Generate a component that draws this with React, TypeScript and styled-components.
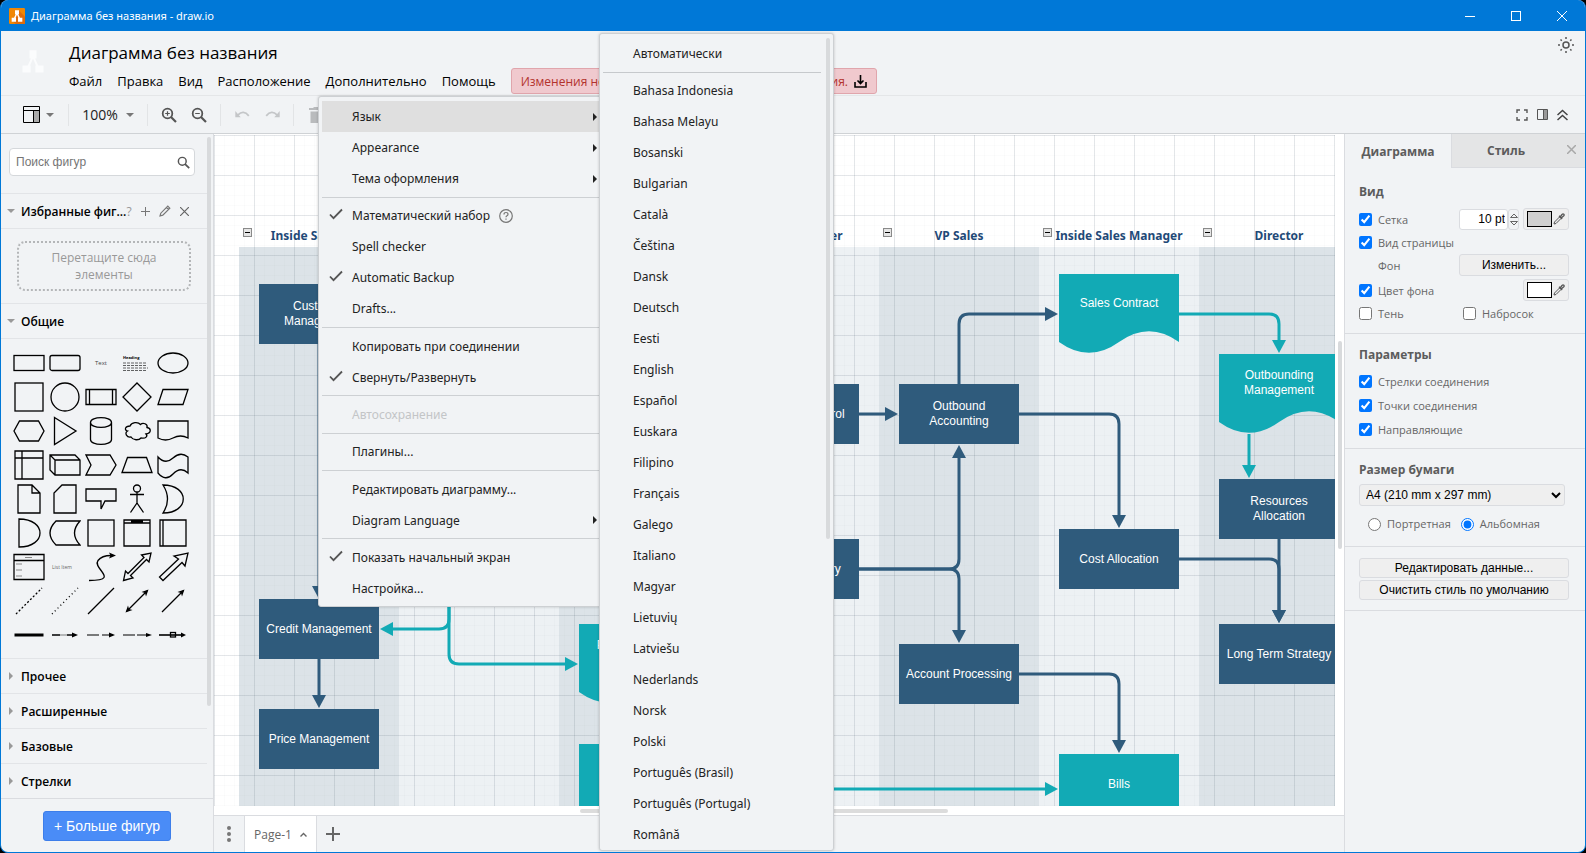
import React from "react";
import styled, { createGlobalStyle, css } from "styled-components";

const ui = `"Open Sans", "Noto Sans", sans-serif`;
const noto = `"Noto Sans", "Open Sans", sans-serif`;
const arial = `"Liberation Sans", Arial, sans-serif`;
const surface = "#f1f3f5";
const line = "#dadce0";
const navy = "#2f5b7c";
const teal = "#12aab5";

const GlobalStyle = createGlobalStyle`
  * { box-sizing: border-box; }
  html, body { margin: 0; background: #000; }
  body { font-family: ${ui}; font-size: 13px; color: #000; }
  button, input, select { font-family: inherit; }
`;

/* ---------- window frame ---------- */

const Window = styled.div`
  position: relative;
  display: flex;
  flex-direction: column;
  height: 100vh;
  min-height: 640px;
  overflow: hidden;
  border: 1px solid #0078d7;
  border-top: 0;
  border-radius: 8px;
  background: ${surface};
`;

const TitleBar = styled.header`
  display: flex;
  align-items: center;
  flex: none;
  height: 31px;
  padding-left: 8px;
  background: #0078d7;
  color: #fff;
  font-family: ${noto};
  font-size: 11px;
`;

const WindowTitle = styled.span`
  flex: 1;
  padding-left: 6px;
`;

const CaptionButton = styled.button`
  display: flex;
  align-items: center;
  justify-content: center;
  width: 46px;
  height: 31px;
  padding: 0;
  border: 0;
  background: none;
  color: #fff;
`;

const Header = styled.div`
  display: flex;
  flex: none;
  height: 65px;
  padding-left: 12px;
  border-bottom: 1px solid #e4e6e8;
`;

const LogoArea = styled.div`
  width: 56px;
  padding: 17px 0 0 6px;
`;

const HeaderMain = styled.div`
  flex: 1;
`;

const DocTitle = styled.h1`
  margin: 0;
  padding-top: 7px;
  font-size: 17px;
  line-height: 30px;
  font-weight: 400;
`;

const MenuBar = styled.nav`
  display: flex;
  align-items: center;
  height: 26px;
`;

const MenuButton = styled.button`
  margin-right: 15px;
  padding: 0;
  border: 0;
  background: none;
  font-size: 13px;
  line-height: 26px;
  color: #000;
`;

const Notice = styled.button`
  display: flex;
  align-items: center;
  gap: 6px;
  height: 26px;
  padding: 0 9px;
  border: 1px solid #e0a5ac;
  border-radius: 3px;
  background: #f0c9ce;
  color: #b3322d;
  font-size: 12px;
  white-space: nowrap;
`;

const HeaderSide = styled.div`
  padding: 6px 11px 0 0;
`;

const IconButton = styled.button<{ $w?: number }>`
  display: flex;
  align-items: center;
  justify-content: center;
  gap: 6px;
  width: ${(p) => p.$w ?? 16}px;
  padding: 0;
  border: 0;
  background: none;
  color: #555;
`;

/* ---------- toolbar ---------- */

const Toolbar = styled.div`
  display: flex;
  align-items: center;
  flex: none;
  height: 38px;
  padding: 0 15px 0 20px;
  border-bottom: 1px solid #cfd2d5;
`;

const ToolGroup = styled.div<{ $w: number; $start?: boolean }>`
  display: flex;
  align-items: center;
  justify-content: ${(p) => (p.$start ? "flex-start" : "center")};
  gap: 14px;
  width: ${(p) => p.$w}px;
  height: 22px;
  border-right: 1px solid #e2e4e6;
`;

const ZoomButton = styled.button`
  display: flex;
  align-items: center;
  gap: 8px;
  padding: 0;
  border: 0;
  background: none;
  font-size: 14px;
  line-height: 22px;
  color: #222;
`;

const Spacer = styled.div`
  flex: 1;
`;

const ToolbarSide = styled.div`
  display: flex;
  gap: 4px;
`;

/* ---------- sidebar ---------- */

const Body = styled.div`
  display: flex;
  flex: 1;
  min-height: 0;
`;

const Sidebar = styled.aside`
  display: flex;
  flex-direction: column;
  flex: none;
  width: 213px;
  border-right: 1px solid ${line};
`;

const SidebarScroll = styled.div`
  display: flex;
  flex: 1;
  min-height: 0;
  overflow: hidden;
  padding-right: 2px;
  border-bottom: 1px solid ${line};
`;

const Palettes = styled.div`
  flex: 1;
`;

const Thumb = styled.div<{ $h: number; $top: number }>`
  flex: none;
  width: 4px;
  height: ${(p) => p.$h}px;
  margin-top: ${(p) => p.$top}px;
  background: #d8dadc;
  border-radius: 2px;
`;

const SearchBox = styled.label`
  display: flex;
  align-items: center;
  width: 186px;
  height: 28px;
  margin: 14px 0 17px 8px;
  padding-right: 4px;
  border: 1px solid #d5d8db;
  border-radius: 4px;
  background: #fff;
`;

const SearchInput = styled.input`
  flex: 1;
  min-width: 0;
  padding: 0 0 0 6px;
  border: 0;
  outline: 0;
  background: none;
  font-family: ${arial};
  font-size: 12px;
  &::placeholder { color: #757575; }
`;

const PaletteTitle = styled.div`
  display: flex;
  align-items: center;
  height: 35px;
  border-top: 1px solid #e2e4e7;
  padding-left: 6px;
`;

const PaletteToggle = styled.button`
  display: flex;
  align-items: center;
  gap: 6px;
  padding: 0;
  border: 0;
  background: none;
  font-size: 12px;
  font-weight: 600;
  color: #000;
  white-space: nowrap;
`;

const PaletteTools = styled.div`
  display: flex;
  align-items: center;
  gap: 9px;
  color: #999;
  font-size: 12px;
`;

const DropHint = styled.div`
  display: flex;
  align-items: center;
  justify-content: center;
  width: 174px;
  height: 50px;
  margin: 12px 0 12px 16px;
  border: 2px dotted #b4b6b8;
  border-radius: 8px;
  color: #999;
  font-size: 12px;
  line-height: 17px;
  text-align: center;
`;

const ShapeBlock = styled.div`
  border-top: 1px solid #e2e4e7;
`;

const ShapeGrid = styled.div`
  display: grid;
  grid-template-columns: repeat(5, 36px);
  grid-auto-rows: 34px;
  padding: 7px 0 6px 10px;
`;

const ShapeButton = styled.button`
  display: flex;
  align-items: center;
  justify-content: center;
  padding: 0;
  border: 0;
  background: none;
`;

const MoreArea = styled.div`
  display: flex;
  justify-content: center;
  flex: none;
  height: 53px;
  padding-top: 12px;
`;

const MoreButton = styled.button`
  width: 128px;
  height: 30px;
  padding: 0;
  border: 1px solid #3d7eea;
  border-radius: 3px;
  background: #4a8cf7;
  color: #fff;
  font-family: ${arial};
  font-size: 14px;
`;

/* ---------- canvas ---------- */

const Center = styled.main`
  display: flex;
  flex-direction: column;
  flex: 1;
  min-width: 0;
`;

const CanvasArea = styled.div`
  display: grid;
  grid-template-columns: 1fr 9px;
  grid-template-rows: 1fr 9px;
  flex: 1;
  min-height: 0;
  background: #fff;
`;

const Viewport = styled.div`
  position: relative;
  overflow: hidden;
`;

const Grid = styled.div`
  position: absolute;
  inset: 1px 0 0 0;
  background-image: linear-gradient(to right, rgba(60, 80, 100, 0.12) 1px, transparent 1px),
    linear-gradient(to bottom, rgba(60, 80, 100, 0.12) 1px, transparent 1px),
    linear-gradient(to right, rgba(60, 80, 100, 0.02) 1px, transparent 1px),
    linear-gradient(to bottom, rgba(60, 80, 100, 0.02) 1px, transparent 1px);
  background-size: 40px 40px, 40px 40px, 10px 10px, 10px 10px;
`;

const Lane = styled.section<{ $index: number }>`
  position: absolute;
  left: ${(p) => 25 + p.$index * 160}px;
  top: 86px;
  bottom: 0;
  width: 160px;
  display: flex;
  flex-direction: column;
`;

const LaneHead = styled.div`
  position: relative;
  flex: none;
  height: 27px;
  background: #fff;
  color: #1f4a78;
  font-family: ${noto};
  font-size: 12px;
  line-height: 32px;
  font-weight: 700;
  text-align: center;
  white-space: nowrap;
`;

const LaneFill = styled.div<{ $dark: boolean }>`
  flex: 1;
  background: ${(p) => (p.$dark ? "#dce3e8" : "#edf1f4")};
`;

const Fold = styled.button`
  position: absolute;
  left: 4px;
  top: 8px;
  display: flex;
  align-items: center;
  justify-content: center;
  width: 9px;
  height: 9px;
  padding: 0;
  border: 1px solid #8a8a8a;
  background: #e6e6e6;
  &::before { content: ""; width: 5px; height: 1px; background: #000; }
`;

const Edges = styled.svg`
  position: absolute;
  left: 0;
  top: 0;
  overflow: visible;
`;

const Node = styled.div<{ $x: number; $y: number; $h: number; $fill?: string }>`
  position: absolute;
  left: ${(p) => p.$x}px;
  top: ${(p) => p.$y}px;
  display: flex;
  align-items: center;
  justify-content: center;
  width: 120px;
  height: ${(p) => p.$h}px;
  background: ${(p) => p.$fill ?? "none"};
  color: #fff;
  font-family: ${arial};
  font-size: 12px;
  line-height: 15px;
  text-align: center;
  white-space: pre;
`;

const VScroll = styled.div`
  display: flex;
  justify-content: center;
`;

const HScroll = styled.div`
  display: flex;
  align-items: center;
  padding-left: 366px;
`;

const HThumb = styled.div`
  width: 368px;
  height: 4px;
  border-radius: 2px;
  background: #dcdcdc;
`;

const PageTabs = styled.div`
  display: flex;
  flex: none;
  height: 37px;
  border-top: 1px solid ${line};
`;

const PageTab = styled.button`
  display: flex;
  align-items: center;
  justify-content: center;
  gap: 8px;
  width: 73px;
  padding: 0;
  border: 0;
  border-right: 1px solid ${line};
  border-left: 1px solid ${line};
  background: #fff;
  color: #666;
  font-size: 12px;
`;

/* ---------- format panel ---------- */

const Panel = styled.aside`
  flex: none;
  width: 241px;
  border-left: 1px solid ${line};
  color: #666;
  font-size: 11px;
`;

const Tabs = styled.div`
  display: flex;
  height: 34px;
  font-size: 12px;
  font-weight: 700;
`;

const Tab = styled.button<{ $active?: boolean }>`
  flex: 1;
  padding: 0;
  border: 0;
  background: none;
  color: #5c5c5c;
  font: inherit;
  ${(p) =>
    !p.$active &&
    css`
      display: flex;
      align-items: center;
      padding-left: 35px;
      border-left: 1px solid ${line};
      border-bottom: 1px solid ${line};
      background: #e4e5e6;
      flex: 0 0 134px;
    `}
`;

const TabClose = styled.span`
  display: flex;
  justify-content: flex-end;
  flex: 1;
  padding: 0 9px 3px 0;
  color: #a8a8a8;
`;

const Section = styled.section<{ $pt: number; $pb: number }>`
  padding: ${(p) => p.$pt}px 16px ${(p) => p.$pb}px 14px;
  border-bottom: 1px solid ${line};
`;

const SectionTitle = styled.h2`
  margin: 0 0 4px;
  font-size: 12px;
  line-height: 20px;
  font-weight: 700;
  color: #5c5c5c;
`;

const Row = styled.div<{ $h: number }>`
  display: flex;
  align-items: center;
  height: ${(p) => p.$h}px;
`;

const Check = styled.label<{ $w?: number }>`
  display: flex;
  align-items: center;
  gap: 6px;
  ${(p) => (p.$w ? `width: ${p.$w}px;` : "flex: 1;")}
  white-space: nowrap;
`;

const Box = styled.input`
  width: 13px;
  height: 13px;
  margin: 0;
`;

const BackgroundLabel = styled.span`
  flex: 1;
  padding-left: 19px;
`;

const SizeInput = styled.input`
  width: 49px;
  height: 21px;
  padding: 0 2px;
  border: 1px solid ${line};
  border-radius: 3px;
  background: #fff;
  font-family: ${arial};
  font-size: 12px;
  text-align: right;
`;

const Stepper = styled.span`
  display: flex;
  align-items: center;
  justify-content: center;
  width: 11px;
  height: 21px;
  margin-right: 4px;
  border: 1px solid ${line};
  border-radius: 3px;
`;

const ColorButton = styled.button<{ $color: string }>`
  display: flex;
  align-items: center;
  justify-content: space-between;
  width: 46px;
  height: 22px;
  padding: 0 3px;
  border: 1px solid ${line};
  border-radius: 3px;
  background: #efefef;
  color: #444;
  &::before {
    content: "";
    width: 23px;
    height: 14px;
    border: 1px solid #000;
    background: ${(p) => p.$color};
  }
`;

const PlainButton = styled.button<{ $w: number; $h: number }>`
  display: block;
  width: ${(p) => p.$w}px;
  height: ${(p) => p.$h}px;
  padding: 0;
  border: 1px solid ${line};
  border-radius: 3px;
  background: #efefef;
  color: #000;
  font-family: ${arial};
  font-size: 12px;
`;

const Actions = styled.div`
  display: grid;
  gap: 2px;
`;

const PaperSelect = styled.select`
  display: block;
  width: 206px;
  height: 22px;
  padding: 0 2px;
  border: 1px solid ${line};
  border-radius: 3px;
  background: #efefef;
  color: #000;
  font-family: ${arial};
  font-size: 12px;
`;

const Orientation = styled.div`
  display: flex;
  gap: 10px;
  padding: 9px 0 0 9px;
`;

const Radio = styled.label`
  display: flex;
  align-items: center;
  gap: 6px;
  line-height: 18px;
`;

/* ---------- menus ---------- */

const Popup = styled.div<{ $x: number; $y: number; $w: number }>`
  position: absolute;
  left: ${(p) => p.$x}px;
  top: ${(p) => p.$y}px;
  width: ${(p) => p.$w}px;
  display: flex;
  flex-direction: column;
  padding: 4px 3px 2px;
  border: 1px solid #cdd0d3;
  border-radius: 3px;
  background: ${surface};
  box-shadow: 0 0 3px rgba(0, 0, 0, 0.2);
`;

const MainPopup = styled(Popup)`
  min-height: 511px;
`;

const LanguagePopup = styled(Popup)`
  flex-direction: row;
  bottom: 1px;
  overflow: hidden;
`;

const LanguageList = styled.div`
  flex: 1;
`;

const MenuItem = styled.button<{ $hover?: boolean }>`
  display: flex;
  align-items: center;
  flex: none;
  width: 100%;
  height: 31px;
  padding: 0 5px 0 0;
  border: 0;
  background: ${(p) => (p.$hover ? "#dfdfdf" : "none")};
  color: #222;
  font-family: ${noto};
  font-size: 12px;
  text-align: left;
  white-space: nowrap;
  &:disabled { color: #c3c5c7; }
`;

const MenuMark = styled.span`
  display: flex;
  width: 30px;
  padding: 0 0 3px 7px;
`;

const MenuText = styled.span`
  display: flex;
  align-items: center;
  flex: 1;
  gap: 9px;
`;

const MenuRule = styled.hr`
  flex: 1;
  width: 100%;
  min-height: 6px;
  margin: 0;
  border: 0;
  background: linear-gradient(#cdd0d3, #cdd0d3) center / 100% 1px no-repeat;
`;

const LanguageRule = styled.hr`
  height: 6px;
  margin: 0 5px 0 0;
  border: 0;
  background: linear-gradient(#c6c9cc, #c6c9cc) center / 100% 1px no-repeat;
`;

/* ---------- icons ---------- */

const Caret = ({ dir = "down", color = "#777" }: { dir?: "down" | "right"; color?: string }) => (
  <svg width="8" height="8" viewBox="0 0 8 8" fill={color}>
    <path d={dir === "down" ? "M0 2h8L4 6z" : "M2 0v8l4-4z"} />
  </svg>
);

const LogoMark = ({ size, color }: { size: number; color: string }) => (
  <svg width={size} height={size} viewBox="0 0 24 24" fill={color}>
    <path d="M9 2h6v7h-1.200l2.700 6H21v6h-7v-6h.500l-2.500-6-2.500 6H10v6H3v-6h4.500l2.700-6H9z" />
  </svg>
);

const Magnifier = ({ sign, size = 16 }: { sign?: "+" | "-"; size?: number }) => (
  <svg width={size} height={size} viewBox="0 0 16 16" fill="none" stroke="#555" strokeWidth="1.800">
    <circle cx="6.500" cy="6.500" r="4.800" />
    <path d="M10 10l5 5" strokeWidth="2.200" />
    {sign && <path d="M4.200 6.500h4.600" strokeWidth="1.200" />}
    {sign === "+" && <path d="M6.500 4.200v4.600" strokeWidth="1.200" />}
  </svg>
);

const Pipette = () => (
  <svg width="12" height="12" viewBox="0 0 12 12" fill="none" stroke="#555" strokeWidth="1">
    <path d="M1 11l.500-2 5-5 1.500 1.500-5 5z" />
    <path d="M6 2.800l3.200 3.200M7.500 3.500L9 1.500q1-1 1.800-.200t-.300 1.800L8.500 4.800" strokeWidth="1.300" />
  </svg>
);

const Pencil = () => (
  <svg width="12" height="12" viewBox="0 0 12 12" fill="none" stroke="#777" strokeWidth="1.200">
    <path d="M1 11l.800-2.800L8.800 1.200 10.800 3.200 3.800 10.200zM7.500 2.500l2 2" />
  </svg>
);

const CheckMark = () => (
  <svg width="14" height="12" viewBox="0 0 14 12" fill="none" stroke="#555" strokeWidth="1.800">
    <path d="M1 6.500l3.500 3.700L13 1.500" />
  </svg>
);

/* ---------- palette drawings (32 x 32 each) ---------- */

const shapes: [string, React.ReactNode][] = [
  ["Rectangle", <rect x="1" y="8.500" width="30" height="15" />],
  ["Rounded Rectangle", <rect x="1" y="8.500" width="30" height="15" rx="2" />],
  ["Text", <text x="16" y="18" fontSize="6" textAnchor="middle" stroke="none" fill="#444">Text</text>],
  ["Textbox", <><text x="2" y="12" fontSize="4" fontWeight="700" stroke="none" fill="#000">Heading</text><path d="M2 16h23M2 18.500h24M2 21h25M2 23.500h24" strokeWidth=".6" strokeDasharray="3 1" /></>],
  ["Ellipse", <ellipse cx="16" cy="16" rx="15" ry="10" />],
  ["Square", <rect x="2" y="2" width="28" height="28" />],
  ["Circle", <circle cx="16" cy="16" r="14" />],
  ["Process", <path d="M1 8.500h30v15H1zM4.500 8.500v15M27.500 8.500v15" />],
  ["Diamond", <path d="M16 2l14 14-14 14L2 16z" />],
  ["Parallelogram", <path d="M6 8.500h25l-5 15H1z" />],
  ["Hexagon", <path d="M6.500 6h19L31 16l-5.500 10h-19L1 16z" />],
  ["Triangle", <path d="M5.500 2.500L27 16 5.500 29.500z" />],
  ["Cylinder", <path d="M5.500 7.500v17c0 6.500 21 6.500 21 0v-17c0-6.500-21-6.500-21 0c0 6.500 21 6.500 21 0" />],
  ["Cloud", <path d="M9 11C4 11 3 15 6.500 16 3 18 6 23 10 22c2 3.500 8 3.500 10 1 5 1 7-2 5-4 6-1 5-6 1-6.500C27 9 22 7 19.500 9.500 17 6.500 10.500 7 9 11z" />],
  ["Document", <path d="M1 6h30v17q-7.500-4-15 0t-15 0z" />],
  ["Internal Storage", <path d="M2 2h28v28H2zM9 2v28M2 9h28" />],
  ["Cube", <path d="M1 6h25l5 5v15H6l-5-5zM1 6l5 5v15M6 11h25" />],
  ["Step", <path d="M1 6h24l6 10-6 10H1l5-10z" />],
  ["Trapezoid", <path d="M6.500 8.500h19l5.500 15H1z" />],
  ["Tape", <path d="M1 8q7.500 8 15 1T31 8v16q-7.500-7-15 1T1 24z" />],
  ["Note", <path d="M5 2h14l8 8v20H5zM19 2v8h8" />],
  ["Card", <path d="M13 2h14v28H5V10z" />],
  ["Callout", <path d="M1 6h30v12H20l-4 8v-8H1z" />],
  ["Actor", <><circle cx="16" cy="5.500" r="3.500" /><path d="M16 9v11M9 11.500h14M16 20l-6.500 9.500M16 20l6.500 9.500" /></>],
  ["Or", <path d="M6 2c27 0 27 28 0 28q9-14 0-28z" />],
  ["And", <path d="M6 2c28 0 28 28 0 28z" />],
  ["Data Storage", <path d="M7 4h24q-11 12 0 24H7Q-5 16 7 4z" />],
  ["Container", <rect x="3" y="3" width="26" height="26" />],
  ["Vertical Container", <path d="M3 3h26v26H3zM3 6h26M10 4.500h12" />],
  ["Horizontal Container", <path d="M3 3h26v26H3zM6 3v26" />],
  ["List", <><path d="M1 3.500h30v25H1zM1 9.500h30" /><path d="M12 6.500h7M3 13h6M3 19h6M3 25h6" stroke="#888" strokeWidth="1" /></>],
  ["List Item", <text x="3" y="18" fontSize="5" stroke="none" fill="#666">List Item</text>],
  ["Curve", <><path d="M4 29.500c32 0 3-12 9-20 3-4 7-5 13-5" /><path d="M31 4.500l-7-3 1.500 3-1.500 3z" fill="#000" stroke="none" /></>],
  ["Bidirectional Arrow", <path d="M30 2l-2 9-2.500-2.500L9.500 24.500 12 27l-9.500 2.500 2-9.500L7 22.500 23 6.500 20.500 4z" />],
  ["Arrow", <path d="M31 2l-3 13-3-3.500L6 29.500 2.500 26l19-18L17 5z" />],
  ["Dashed Line", <path d="M3 29L29 3" strokeDasharray="2 2" />],
  ["Dotted Line", <path d="M3 29L29 3" strokeDasharray="1 3" />],
  ["Line", <path d="M3 29L29 3" />],
  ["Bidirectional Connector", <><path d="M6 26L26 6" /><path d="M27.500 4.500l-2.500 7-1-3.500-3.500-1zM4.500 27.500l2.500-7 1 3.500 3.500 1z" fill="#000" stroke="none" /></>],
  ["Directional Connector", <><path d="M5 27L26 6" /><path d="M27.500 4.500l-2.500 7-1-3.500-3.500-1z" fill="#000" stroke="none" /></>],
  ["Link", <path d="M1.500 16h29" strokeWidth="3" />],
  ["Connector with Label", <><path d="M3 16h8M18 16h8" /><path d="M11 16h7" strokeWidth=".5" /><path d="M29 16l-6-2.500v5z" fill="#000" stroke="none" /></>],
  ["Connector with 2 Labels", <><path d="M2 16h26" strokeWidth="1.200" strokeDasharray="12 3" /><path d="M30 16l-6-2.500v5z" fill="#000" stroke="none" /></>],
  ["Connector with 3 Labels", <><path d="M2 16h26" strokeWidth="1.200" strokeDasharray="12 2" /><path d="M31 16l-6-2v4z" fill="#000" stroke="none" /></>],
  ["Connector with Symbol", <><path d="M2 16h24" strokeWidth="1.600" /><path d="M29 16l-5-2.500v5z" fill="#000" stroke="none" /><rect x="13.500" y="13.500" width="5" height="4.500" /></>],
];

/* ---------- diagram ---------- */

const lanes = ["Inside Sales Rep", "", "", "Sales Manager", "VP Sales", "Inside Sales Manager", "Director"];

type NodeData = { lane: number; y: number; text: string; doc?: boolean; teal?: boolean; tall?: boolean };
const nodes: NodeData[] = [
  { lane: 0, y: 150, text: "Customer\nManagement" },
  { lane: 0, y: 465, text: "Credit Management" },
  { lane: 0, y: 575, text: "Price Management" },
  { lane: 2, y: 490, text: "Purchase Order\nProcessing", doc: true, teal: true },
  { lane: 2, y: 610, text: "", teal: true, tall: true },
  { lane: 3, y: 250, text: "Inventory Control" },
  { lane: 3, y: 405, text: "Order Inventory" },
  { lane: 4, y: 250, text: "Outbound\nAccounting" },
  { lane: 4, y: 510, text: "Account Processing" },
  { lane: 5, y: 140, text: "Sales Contract", doc: true, teal: true },
  { lane: 5, y: 395, text: "Cost Allocation" },
  { lane: 5, y: 620, text: "Bills", teal: true },
  { lane: 6, y: 220, text: "Outbounding\nManagement", doc: true, teal: true },
  { lane: 6, y: 345, text: "Resources\nAllocation" },
  { lane: 6, y: 490, text: "Long Term Strategy" },
];

const nodeX = (lane: number) => 45 + lane * 160;
const nodeHeight = (n: NodeData) => (n.doc ? 58 : n.tall ? 80 : 60);

const edges: { d: string; teal?: boolean }[] = [
  { d: "M105 210V453" },
  { d: "M105 525V562" },
  { d: "M235 440V485Q235 495 225 495H178", teal: true },
  { d: "M235 440V520Q235 530 245 530H352", teal: true },
  { d: "M645 280H672" },
  { d: "M745 250V190Q745 180 755 180H832" },
  { d: "M965 180H1055Q1065 180 1065 190V207", teal: true },
  { d: "M1035 300V332", teal: true },
  { d: "M805 280H895Q905 280 905 290V382" },
  { d: "M645 435H735Q745 435 745 425V323" },
  { d: "M645 435H735Q745 435 745 445V497" },
  { d: "M965 425H1055Q1065 425 1065 435V477" },
  { d: "M1065 405V477" },
  { d: "M805 540H895Q905 540 905 550V607" },
  { d: "M485 655H832", teal: true },
];

const Diagram = () => (
  <Viewport>
    {lanes.map((name, i) => (
      <Lane key={i} $index={i}>
        <LaneHead>
          <Fold aria-label="Collapse" />
          {name}
        </LaneHead>
        <LaneFill $dark={i % 2 === 0} />
      </Lane>
    ))}
    <Grid />
    <Edges width="1200" height="700">
      <defs>
        {[["navy", navy], ["teal", teal]].map(([id, color]) => (
          <marker key={id} id={id} markerUnits="userSpaceOnUse" markerWidth="13" markerHeight="14" refX="1" refY="7" orient="auto">
            <path d="M0 0L13 7L0 14z" fill={color} />
          </marker>
        ))}
      </defs>
      {edges.map((e, i) => (
        <path key={i} d={e.d} fill="none" stroke={e.teal ? teal : navy} strokeWidth="3" markerEnd={`url(#${e.teal ? "teal" : "navy"})`} />
      ))}
      {nodes.filter((n) => n.doc).map((n) => (
        <path
          key={n.text}
          transform={`translate(${nodeX(n.lane)} ${n.y})`}
          d="M0 0H120V68Q90 46.400 60 68T0 68z"
          fill={teal}
        />
      ))}
    </Edges>
    {nodes.map((n, i) => (
      <Node key={i} $x={nodeX(n.lane)} $y={n.y} $h={nodeHeight(n)} $fill={n.doc ? undefined : n.teal ? teal : navy}>
        {n.text}
      </Node>
    ))}
  </Viewport>
);

/* ---------- menu data ---------- */

type Item = { text: string; sub?: boolean; checked?: boolean; off?: boolean; help?: boolean; hover?: boolean } | null;
const extras: Item[] = [
  { text: "Язык", sub: true, hover: true },
  { text: "Appearance", sub: true },
  { text: "Тема оформления", sub: true },
  null,
  { text: "Математический набор", checked: true, help: true },
  { text: "Spell checker" },
  { text: "Automatic Backup", checked: true },
  { text: "Drafts..." },
  null,
  { text: "Копировать при соединении" },
  { text: "Свернуть/Развернуть", checked: true },
  null,
  { text: "Автосохранение", off: true },
  null,
  { text: "Плагины..." },
  null,
  { text: "Редактировать диаграмму..." },
  { text: "Diagram Language", sub: true },
  null,
  { text: "Показать начальный экран", checked: true },
  { text: "Настройка..." },
];

const languages = [
  "Bahasa Indonesia", "Bahasa Melayu", "Bosanski", "Bulgarian", "Català", "Čeština", "Dansk", "Deutsch", "Eesti",
  "English", "Español", "Euskara", "Filipino", "Français", "Galego", "Italiano", "Magyar", "Lietuvių", "Latviešu",
  "Nederlands", "Norsk", "Polski", "Português (Brasil)", "Português (Portugal)", "Română",
];

const Tick = ({ label, w, on }: { label: string; w?: number; on?: boolean }) => (
  <Check $w={w}>
    <Box type="checkbox" defaultChecked={on} />
    {label}
  </Check>
);

export default function App() {
  return (
    <>
      <GlobalStyle />
      <Window>
        <TitleBar>
          <svg width="16" height="16" viewBox="0 0 24 24">
            <rect width="24" height="24" rx="2" fill="#f08705" />
            <path d="M14 3l10 10v11H10L5 19z" fill="#df6c0c" />
            <path d="M9 3.500h6v6h-1l2.500 5H20v6h-6.500v-6H14L12 10l-2 4.500h.500v6H4v-6h3.500l2.500-5H9z" fill="#fff" />
          </svg>
          <WindowTitle>Диаграмма без названия - draw.io</WindowTitle>
          <CaptionButton aria-label="Minimize">
            <svg width="10" height="10" stroke="#fff"><path d="M0 5.500h10" /></svg>
          </CaptionButton>
          <CaptionButton aria-label="Maximize">
            <svg width="10" height="10" stroke="#fff" fill="none"><rect x=".5" y=".5" width="9" height="9" /></svg>
          </CaptionButton>
          <CaptionButton aria-label="Close">
            <svg width="10" height="10" stroke="#fff"><path d="M0 0l10 10M10 0L0 10" /></svg>
          </CaptionButton>
        </TitleBar>

        <Header>
          <LogoArea>
            <LogoMark size={28} color="#fbfcfd" />
          </LogoArea>
          <HeaderMain>
            <DocTitle>Диаграмма без названия</DocTitle>
            <MenuBar>
              {["Файл", "Правка", "Вид", "Расположение", "Дополнительно", "Помощь"].map((m) => (
                <MenuButton key={m}>{m}</MenuButton>
              ))}
              <Notice>
                Изменения не сохранены. Нажмите для их сохранения.
                <svg width="13" height="13" viewBox="0 0 13 13" fill="none" stroke="#000" strokeWidth="1.600">
                  <path d="M1 7v5h11V7M6.500 0v8M3.500 5.500l3 3 3-3" />
                </svg>
              </Notice>
            </MenuBar>
          </HeaderMain>
          <HeaderSide>
            <IconButton aria-label="Theme">
              <svg width="16" height="16" viewBox="0 0 16 16" fill="none" stroke="#555" strokeWidth="1.500">
                <circle cx="8" cy="8" r="3" />
                <path d="M8 0v2M8 14v2M0 8h2M14 8h2M2.500 2.500l1.300 1.300M12.200 12.200l1.300 1.300M2.500 13.500l1.300-1.300M12.200 3.800l1.300-1.300" />
              </svg>
            </IconButton>
          </HeaderSide>
        </Header>

        <Toolbar>
          <ToolGroup $w={48} $start>
            <IconButton $w={35} aria-label="View">
              <svg width="17" height="17" viewBox="0 0 17 17" fill="none" stroke="#000">
                <rect x="11" y="5" width="5" height="11" fill="#aaa" stroke="none" />
                <path d="M.500.500h16v16H.500zM.500 4.500h16M10.500 4.500v12" />
              </svg>
              <Caret />
            </IconButton>
          </ToolGroup>
          <ToolGroup $w={79}>
            <ZoomButton>
              100%
              <Caret />
            </ZoomButton>
          </ToolGroup>
          <ToolGroup $w={73}>
            <IconButton aria-label="Zoom In"><Magnifier sign="+" /></IconButton>
            <IconButton aria-label="Zoom Out"><Magnifier sign="-" /></IconButton>
          </ToolGroup>
          <ToolGroup $w={73}>
            <IconButton aria-label="Undo">
              <svg width="15" height="9" viewBox="0 0 16 10" fill="none" stroke="#c4c6c8" strokeWidth="2">
                <path d="M3 5.500q6-6 12 1" /><path d="M0 1v7h6z" fill="#c4c6c8" stroke="none" />
              </svg>
            </IconButton>
            <IconButton aria-label="Redo">
              <svg width="15" height="9" viewBox="0 0 16 10" fill="none" stroke="#c4c6c8" strokeWidth="2">
                <path d="M13 5.500q-6-6-12 1" /><path d="M16 1v7h-6z" fill="#c4c6c8" stroke="none" />
              </svg>
            </IconButton>
          </ToolGroup>
          <ToolGroup $w={44}>
            <IconButton aria-label="Delete">
              <svg width="14" height="16" viewBox="0 0 14 16" fill="#b9bbbd">
                <path d="M0 1h4l1-1h4l1 1h4v2H0zM1.500 4.500h11V16h-11z" />
              </svg>
            </IconButton>
          </ToolGroup>
          <Spacer />
          <ToolbarSide>
            <IconButton aria-label="Fullscreen">
              <svg width="12" height="12" viewBox="0 0 12 12" fill="none" stroke="#555" strokeWidth="1.400">
                <path d="M1 4V1h3M8 1h3v3M11 8v3H8M4 11H1V8" />
              </svg>
            </IconButton>
            <IconButton aria-label="Format">
              <svg width="11" height="11" viewBox="0 0 11 11" fill="none" stroke="#555">
                <rect x="7" y="1" width="3" height="9" fill="#999" stroke="none" />
                <path d="M.500.500h10v10H.500zM6.500.500v10" />
              </svg>
            </IconButton>
            <IconButton aria-label="Collapse">
              <svg width="11" height="12" viewBox="0 0 11 12" fill="none" stroke="#444" strokeWidth="1.500">
                <path d="M.500 6l5-4.500 5 4.500M.500 11l5-4.500 5 4.500" />
              </svg>
            </IconButton>
          </ToolbarSide>
        </Toolbar>

        <Body>
          <Sidebar>
            <SidebarScroll>
              <Palettes>
                <SearchBox>
                  <SearchInput aria-label="Поиск фигур" placeholder="Поиск фигур" />
                  <Magnifier size={13} />
                </SearchBox>
                <PaletteTitle>
                  <PaletteToggle>
                    <Caret color="#999" />
                    Избранные фиг...
                  </PaletteToggle>
                  <PaletteTools>
                    ?
                    <svg width="9" height="9" stroke="#777"><path d="M4.500 0v9M0 4.500h9" /></svg>
                    <Pencil />
                    <svg width="9" height="9" stroke="#666" strokeWidth="1.200"><path d="M0 0l9 9M9 0L0 9" /></svg>
                  </PaletteTools>
                </PaletteTitle>
                <ShapeBlock>
                  <DropHint>
                    Перетащите сюда
                    <br />
                    элементы
                  </DropHint>
                </ShapeBlock>
                <PaletteTitle>
                  <PaletteToggle>
                    <Caret color="#999" />
                    Общие
                  </PaletteToggle>
                </PaletteTitle>
                <ShapeBlock>
                  <ShapeGrid>
                    {shapes.map(([name, drawing]) => (
                      <ShapeButton key={name} aria-label={name}>
                        <svg width="32" height="32" viewBox="0 0 32 32" fill="none" stroke="#000" strokeWidth="1.300">
                          {drawing}
                        </svg>
                      </ShapeButton>
                    ))}
                  </ShapeGrid>
                </ShapeBlock>
                {["Прочее", "Расширенные", "Базовые", "Стрелки"].map((t) => (
                  <PaletteTitle key={t}>
                    <PaletteToggle>
                      <Caret dir="right" color="#999" />
                      {t}
                    </PaletteToggle>
                  </PaletteTitle>
                ))}
              </Palettes>
              <Thumb $h={569} $top={3} />
            </SidebarScroll>
            <MoreArea>
              <MoreButton>+ Больше фигур</MoreButton>
            </MoreArea>
          </Sidebar>

          <Center>
            <CanvasArea>
              <Diagram />
              <VScroll>
                <Thumb $h={208} $top={207} />
              </VScroll>
              <HScroll>
                <HThumb />
              </HScroll>
            </CanvasArea>
            <PageTabs>
              <IconButton $w={30} aria-label="Pages">
                <svg width="4" height="16" fill="#777"><circle cx="2" cy="2" r="2" /><circle cx="2" cy="8" r="2" /><circle cx="2" cy="14" r="2" /></svg>
              </IconButton>
              <PageTab>
                Page-1
                <svg width="7" height="5" fill="none" stroke="#666" strokeWidth="1.400"><path d="M.500 4.500l3-3 3 3" /></svg>
              </PageTab>
              <IconButton $w={32} aria-label="Insert Page">
                <svg width="14" height="14" stroke="#666" strokeWidth="2"><path d="M7 0v14M0 7h14" /></svg>
              </IconButton>
            </PageTabs>
          </Center>

          <Panel>
            <Tabs>
              <Tab $active>Диаграмма</Tab>
              <Tab>
                Стиль
                <TabClose>
                  <svg width="9" height="9" stroke="currentColor" strokeWidth="1.500"><path d="M0 0l9 9M9 0L0 9" /></svg>
                </TabClose>
              </Tab>
            </Tabs>
            <Section $pt={14} $pb={8}>
              <SectionTitle>Вид</SectionTitle>
              <Row $h={26}>
                <Tick label="Сетка" on />
                <SizeInput aria-label="Размер сетки" defaultValue="10 pt" />
                <Stepper>
                  <svg width="8" height="15" fill="none" stroke="#666"><path d="M.500 5.500L4 2l3.500 3.500zM.500 9.500L4 13l3.500-3.500z" /></svg>
                </Stepper>
                <ColorButton $color="#d0d0d0" aria-label="Цвет сетки"><Pipette /></ColorButton>
              </Row>
              <Row $h={20}>
                <Tick label="Вид страницы" on />
              </Row>
              <Row $h={26}>
                <BackgroundLabel>Фон</BackgroundLabel>
                <PlainButton $w={110} $h={22}>Изменить...</PlainButton>
              </Row>
              <Row $h={24}>
                <Tick label="Цвет фона" on />
                <ColorButton $color="#ffffff" aria-label="Цвет фона"><Pipette /></ColorButton>
              </Row>
              <Row $h={23}>
                <Tick label="Тень" w={104} />
                <Tick label="Набросок" />
              </Row>
            </Section>
            <Section $pt={11} $pb={7}>
              <SectionTitle>Параметры</SectionTitle>
              <Row $h={24}><Tick label="Стрелки соединения" on /></Row>
              <Row $h={24}><Tick label="Точки соединения" on /></Row>
              <Row $h={24}><Tick label="Направляющие" on /></Row>
            </Section>
            <Section $pt={11} $pb={13}>
              <SectionTitle>Размер бумаги</SectionTitle>
              <PaperSelect aria-label="Размер бумаги">
                <option>A4 (210 mm x 297 mm)</option>
              </PaperSelect>
              <Orientation>
                <Radio><Box type="radio" name="orientation" />Портретная</Radio>
                <Radio><Box type="radio" name="orientation" defaultChecked />Альбомная</Radio>
              </Orientation>
            </Section>
            <Section $pt={11} $pb={10}>
              <Actions>
                <PlainButton $w={210} $h={20}>Редактировать данные...</PlainButton>
                <PlainButton $w={210} $h={20}>Очистить стиль по умолчанию</PlainButton>
              </Actions>
            </Section>
          </Panel>
        </Body>

        <MainPopup $x={317} $y={96} $w={290}>
          {extras.map((item, i) =>
            item === null ? (
              <MenuRule key={i} />
            ) : (
              <MenuItem key={i} $hover={item.hover} disabled={item.off}>
                <MenuMark>{item.checked && <CheckMark />}</MenuMark>
                <MenuText>
                  {item.text}
                  {item.help && (
                    <svg width="14" height="14" viewBox="0 0 14 14" fill="none" stroke="#777" strokeWidth="1.200">
                      <circle cx="7" cy="7" r="6.300" />
                      <path d="M5 5.500q0-2 2-2t2 1.800q0 1-1 1.500t-1 1.500M7 9.500v1.200" />
                    </svg>
                  )}
                </MenuText>
                {item.sub && <Caret dir="right" color="#222" />}
              </MenuItem>
            )
          )}
        </MainPopup>

        <LanguagePopup $x={598} $y={33} $w={235}>
          <LanguageList>
            <MenuItem><MenuMark />Автоматически</MenuItem>
            <LanguageRule />
            {languages.map((l) => (
              <MenuItem key={l}><MenuMark />{l}</MenuItem>
            ))}
          </LanguageList>
          <Thumb $h={501} $top={0} />
        </LanguagePopup>
      </Window>
    </>
  );
}
